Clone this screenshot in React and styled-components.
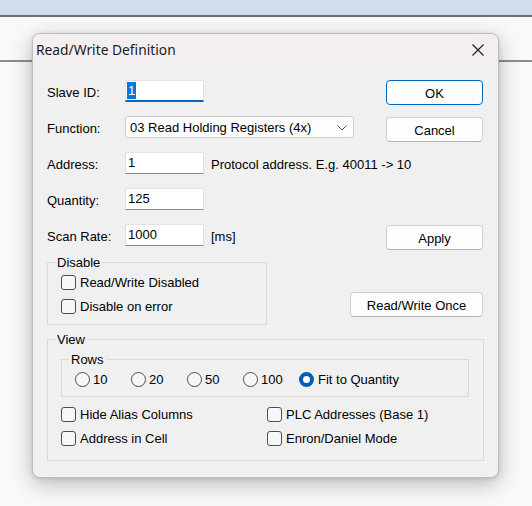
import React from 'react';
import styled, { createGlobalStyle } from 'styled-components';

const GlobalStyle = createGlobalStyle`
  html, body {
    margin: 0;
    padding: 0;
  }
  body {
    width: 532px;
    height: 506px;
    overflow: hidden;
    background: #f8f8f8;
    font-family: "Liberation Sans", Arial, sans-serif;
    font-size: 13px;
    color: #000;
    white-space: nowrap;
  }
`;

const Desktop = styled.div`
  position: relative;
  width: 532px;
  height: 506px;
  background: #f9f9f9;
`;

const TopStrip = styled.div`
  height: 15px;
  background: linear-gradient(#d3dfec, #cfdbe9);
  border-bottom: 2px solid #6f6f6f;
`;

const Rule = styled.div`
  margin-top: 43px;
  height: 2px;
  background: #8d8d8d;
`;

const Dialog = styled.div`
  position: absolute;
  left: 32px;
  top: 33px;
  width: 467px;
  box-sizing: border-box;
  border: 1px solid #bdbdbd;
  border-radius: 8px;
  background: #f0f0f0;
  overflow: hidden;
  box-shadow: 0 6px 22px rgba(0, 0, 0, 0.26), 0 1px 4px rgba(0, 0, 0, 0.12);
`;

const TitleBar = styled.div`
  display: flex;
  align-items: center;
  height: 31px;
  padding: 0 14px 0 3px;
  background: #f3eff1;
`;

const Title = styled.span`
  font-family: "Noto Sans", "Open Sans", sans-serif;
  font-size: 13.8px;
  color: #1b1b1b;
`;

const CloseButton = styled.svg`
  margin-left: auto;
  width: 12px;
  height: 12px;
`;

const Body = styled.div`
  padding: 15px 14px 16px 14px;
`;

const FieldList = styled.div`
  display: flex;
  flex-direction: column;
  gap: 14px;
`;

const FieldRow = styled.div`
  display: flex;
  align-items: flex-start;
  height: 22px;
`;

const Label = styled.span`
  width: 78px;
  padding-top: 2px;
  line-height: 22px;
`;

const TextBox = styled.div`
  width: 79px;
  height: 22px;
  box-sizing: border-box;
  background: #fff;
  border: 1px solid #e2e2e2;
  border-bottom: ${({ $focused }) => ($focused ? '2px solid #0067c0' : '1px solid #8c8c8c')};
  padding-left: 2px;
  line-height: 20px;
`;

const Selected = styled.span`
  display: inline-block;
  margin-left: -1px;
  padding: 0 1px;
  background: #0078d7;
  color: #fff;
  line-height: 17px;
  margin-top: 1px;
`;

const Select = styled.div`
  display: flex;
  align-items: center;
  width: 229px;
  height: 22px;
  box-sizing: border-box;
  background: #fdfdfd;
  border: 1px solid #cdcdcd;
  border-radius: 3px;
  padding: 1px 6px 0 4px;
`;

const Chevron = styled.svg`
  margin-left: auto;
  width: 10px;
  height: 6px;
`;

const Hint = styled.span`
  margin-left: 7px;
  padding-top: 2px;
  line-height: 22px;
`;

const Button = styled.div`
  display: flex;
  align-items: center;
  justify-content: center;
  width: ${({ $width }) => $width || 97}px;
  height: 25px;
  box-sizing: border-box;
  margin-left: auto;
  margin-right: 1px;
  margin-top: ${({ $top }) => $top || 0}px;
  padding-top: 1px;
  background: #fdfdfd;
  border: 1px solid ${({ $primary }) => ($primary ? '#0067c0' : '#d0d0d0')};
  border-bottom-color: ${({ $primary }) => ($primary ? '#0067c0' : '#b5b5b5')};
  border-radius: 4px;
`;

const MiddleSection = styled.div`
  display: flex;
  align-items: flex-start;
  margin-top: 9px;
`;

const Group = styled.fieldset`
  width: ${({ $width }) => ($width ? `${$width}px` : 'auto')};
  box-sizing: border-box;
  margin: ${({ $gapTop }) => $gapTop || 0}px 0 0 0;
  padding: 5px ${({ $padRight }) => $padRight || 0}px ${({ $padBottom }) => $padBottom || 9}px 13px;
  border: 1px solid #dadada;
  min-width: 0;
`;

const Legend = styled.legend`
  margin-left: -6px;
  padding: 0 2px;
  font-size: 13px;
  line-height: 15px;
`;

const CheckList = styled.div`
  display: flex;
  flex-direction: column;
  gap: 9px;
`;

const CheckGrid = styled.div`
  display: grid;
  grid-template-columns: 206px auto;
  row-gap: 9px;
  margin-top: 10px;
`;

const Check = styled.label`
  display: flex;
  align-items: center;
  gap: 4px;
  height: 15px;
  line-height: 15px;
`;

const Box = styled.span`
  width: 15px;
  height: 15px;
  box-sizing: border-box;
  border: 1px solid #4d4d4d;
  border-radius: 3px;
  background: #f7f7f7;
  flex-shrink: 0;
`;

const RadioRow = styled.div`
  display: flex;
`;

const RadioItem = styled.label`
  display: flex;
  align-items: center;
  gap: ${({ $checked }) => ($checked ? 4 : 3)}px;
  width: ${({ $checked }) => ($checked ? 'auto' : '56px')};
  height: 15px;
  line-height: 15px;
`;

const Dot = styled.span`
  width: 15px;
  height: 15px;
  box-sizing: border-box;
  border-radius: 50%;
  flex-shrink: 0;
  border: ${({ $checked }) => ($checked ? '4.5px solid #005fb8' : '1px solid #4d4d4d')};
  background: ${({ $checked }) => ($checked ? '#fff' : '#f7f7f7')};
`;

const fields = [
  { label: 'Slave ID:', value: '1', focused: true, button: 'OK', primary: true },
  { label: 'Function:', select: '03 Read Holding Registers (4x)', button: 'Cancel', top: 1 },
  { label: 'Address:', value: '1', hint: 'Protocol address. E.g. 40011 -> 10' },
  { label: 'Quantity:', value: '125' },
  { label: 'Scan Rate:', value: '1000', hint: '[ms]', button: 'Apply', top: 1 },
];

const rows = ['10', '20', '50', '100', 'Fit to Quantity'];

const App = () => {
  return (
    <Desktop>
      <GlobalStyle />
      <TopStrip />
      <Rule />
      <Dialog>
        <TitleBar>
          <Title>Read/Write Definition</Title>
          <CloseButton viewBox="0 0 12 12">
            <path d="M0.5 0.5 L11.5 11.5 M11.5 0.5 L0.5 11.5" stroke="#1b1b1b" strokeWidth="1.1" fill="none" />
          </CloseButton>
        </TitleBar>
        <Body>
          <FieldList>
            {fields.map((f) => (
              <FieldRow key={f.label}>
                <Label>{f.label}</Label>
                {f.select ? (
                  <Select>
                    {f.select}
                    <Chevron viewBox="0 0 10 6">
                      <path d="M0.5 0.5 L5 5 L9.5 0.5" stroke="#5a5a5a" strokeWidth="1" fill="none" />
                    </Chevron>
                  </Select>
                ) : (
                  <TextBox $focused={f.focused}>
                    {f.focused ? <Selected>{f.value}</Selected> : f.value}
                  </TextBox>
                )}
                {f.hint && <Hint>{f.hint}</Hint>}
                {f.button && (
                  <Button $primary={f.primary} $top={f.top}>
                    {f.button}
                  </Button>
                )}
              </FieldRow>
            ))}
          </FieldList>

          <MiddleSection>
            <Group $width={220} $padBottom={10}>
              <Legend>Disable</Legend>
              <CheckList>
                <Check>
                  <Box />
                  Read/Write Disabled
                </Check>
                <Check>
                  <Box />
                  Disable on error
                </Check>
              </CheckList>
            </Group>
            <Button $width={133} $top={37}>
              Read/Write Once
            </Button>
          </MiddleSection>

          <Group $gapTop={7} $padRight={14} $padBottom={14}>
            <Legend>View</Legend>
            <Group>
              <Legend>Rows</Legend>
              <RadioRow>
                {rows.map((r) => {
                  const checked = r === 'Fit to Quantity';
                  return (
                    <RadioItem key={r} $checked={checked}>
                      <Dot $checked={checked} />
                      {r}
                    </RadioItem>
                  );
                })}
              </RadioRow>
            </Group>
            <CheckGrid>
              <Check>
                <Box />
                Hide Alias Columns
              </Check>
              <Check>
                <Box />
                PLC Addresses (Base 1)
              </Check>
              <Check>
                <Box />
                Address in Cell
              </Check>
              <Check>
                <Box />
                Enron/Daniel Mode
              </Check>
            </CheckGrid>
          </Group>
        </Body>
      </Dialog>
    </Desktop>
  );
};

export default App;
